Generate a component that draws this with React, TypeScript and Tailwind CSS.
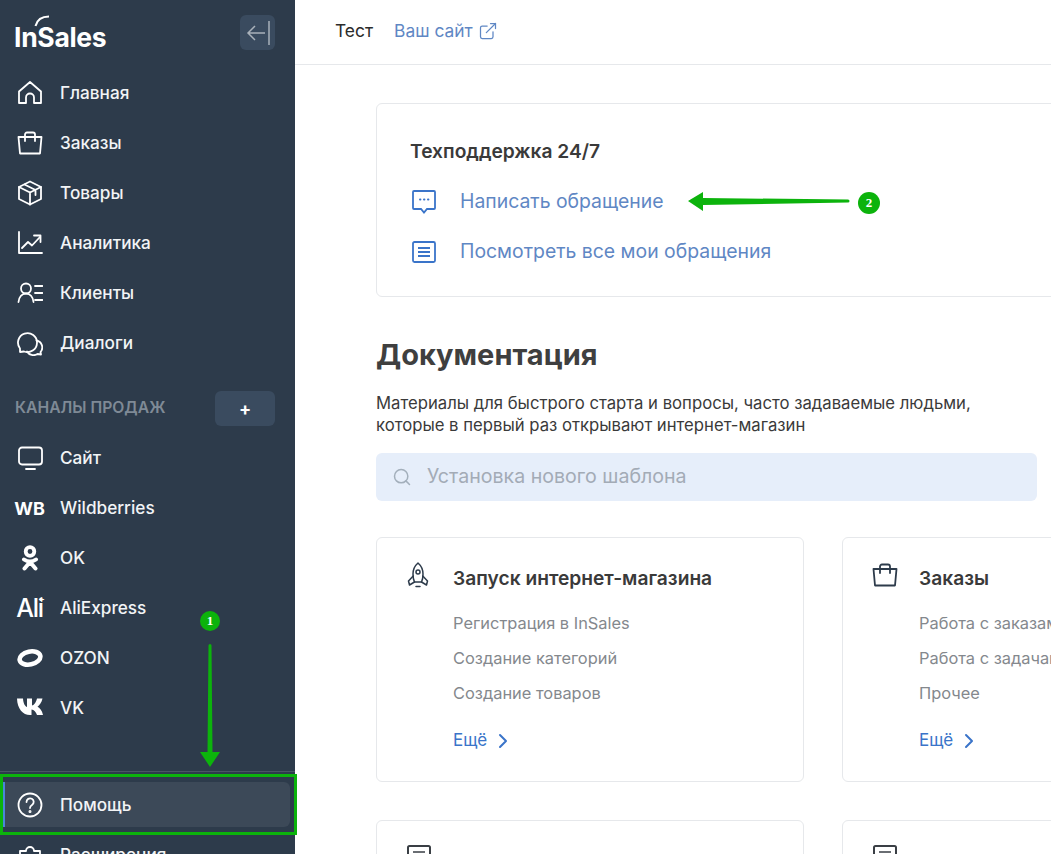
import type { ReactNode } from "react";
import { ChevronRight, ExternalLink, Search } from "lucide-react";

const ico = "h-[26px] w-[26px]";

function Svg({ children, className = ico }: { children: ReactNode; className?: string }) {
  return (
    <svg viewBox="0 0 26 26" fill="none" stroke="currentColor" strokeWidth="1.8" strokeLinecap="round" strokeLinejoin="round" className={className}>
      {children}
    </svg>
  );
}

const HomeIcon = () => (
  <Svg>
    <path d="M2 23V11.500L13 2l11 9.500V23h-7v-5.500a4 4 0 0 0-8 0V23z" />
  </Svg>
);
const BagIcon = ({ className }: { className?: string }) => (
  <Svg className={className}>
    <path d="M1.500 7h23l-1.500 16.500H3z" />
    <path d="M8 11V4.500a2 2 0 0 1 2-2h6a2 2 0 0 1 2 2V11" />
  </Svg>
);
const BoxIcon = () => (
  <Svg>
    <path d="M13 1.500 24 7v12l-11 5.500L2 19V7z" />
    <path d="M2 7l11 5.500L24 7M13 12.500v12M7.500 4.500l11 5.500v5" />
  </Svg>
);
const ChartIcon = () => (
  <Svg>
    <path d="M2 2v21h23" />
    <path d="M5 18l6-6 4 3.500L23 7" />
    <path d="M17 5.500h6.500V12" />
  </Svg>
);
const ClientsIcon = () => (
  <Svg>
    <circle cx="9" cy="8.500" r="5" />
    <path d="M1.500 22c.5-5 3.500-8.500 7.500-8.500s7 3.500 7.500 8.500" />
    <path d="M18 6h7.500M18 13h7.500M18 20h7.500" />
  </Svg>
);
const ChatIcon = () => (
  <Svg>
    <path d="M3 18.500A9.500 9.500 0 1 1 7 21.500l-4 .5z" />
    <path d="M19.500 10.500a7 7 0 0 1 4 11.500l.5 2.500-3.500-.5A7.500 7.500 0 0 1 10 21.500" />
  </Svg>
);
const MonitorIcon = () => (
  <Svg>
    <rect x="2" y="2.500" width="23" height="17" rx="3" />
    <path d="M9 24h9" />
  </Svg>
);
const OkIcon = () => (
  <svg viewBox="0 0 26 26" className={ico} fill="none" stroke="currentColor" strokeLinecap="round">
    <circle cx="13" cy="6.500" r="4.300" strokeWidth="3.800" />
    <path d="M7 14.500c3.600 2.600 8.400 2.600 12 0M13 17l-5.500 6.500M13 17l5.500 6.500" strokeWidth="4" />
  </svg>
);
const OzonIcon = () => (
  <svg viewBox="0 0 26 26" className={ico} fill="none" stroke="currentColor">
    <ellipse cx="13" cy="13" rx="10.500" ry="6.500" strokeWidth="4.600" transform="rotate(-12 13 13)" />
  </svg>
);
const VkIcon = () => (
  <svg viewBox="0 0 26 26" className={ico} fill="currentColor">
    <path d="M0 3.500h6c.3 5.500 2.500 8 4 8.500V3.500h5v7c1.800-.2 4-3 5-7h5.500c-.9 4.500-3.400 7-5 8.300 2 1 4.500 3.500 5.500 8.200h-6c-.9-3-3-5.300-5.500-5.500v5.500H13C6 20 .3 14 0 3.500z" />
  </svg>
);
const HelpIcon = () => (
  <Svg>
    <circle cx="13" cy="13" r="11.500" />
    <path d="M9.500 10a3.600 3.600 0 1 1 5.500 3c-1.300.9-2 1.500-2 3" />
    <circle cx="13" cy="19.500" r=".6" />
  </Svg>
);
const PuzzleIcon = () => (
  <Svg>
    <path d="M3 9h6a3.500 3.500 0 1 1 8 0h6v6a3.500 3.500 0 1 1 0 8v3H3z" />
  </Svg>
);
const RocketIcon = () => (
  <svg viewBox="0 0 24 28" fill="none" stroke="#2d3b4b" strokeWidth="1.500" strokeLinecap="round" strokeLinejoin="round" className="h-[28px] w-[24px]">
    <path d="M12 2c-3.500 3-5 7-5 11 0 3 .5 6 1.500 8h7c1-2 1.500-5 1.500-8 0-4-1.500-8-5-11z" />
    <circle cx="12" cy="11" r="2" />
    <path d="M7.200 15 2.500 20l1 4 5-3M16.800 15l4.700 5-1 4-5-3M10 25.500h4" />
  </svg>
);
const DocIcon = () => (
  <svg viewBox="0 0 26 26" fill="none" stroke="#3a3f45" strokeWidth="2" className="h-[26px] w-[26px]">
    <rect x="2" y="1" width="22" height="24" rx="1.500" />
    <path d="M7 7h12M7 12h12M7 17h12" strokeWidth="1.600" />
  </svg>
);

const NavText = ({ children }: { children: ReactNode }) => (
  <span className="text-[17.2px] font-medium text-[#f2f4f6]">{children}</span>
);

function NavItem({ icon, label }: { icon: ReactNode; label: string }) {
  return (
    <div className="flex h-[50px] shrink-0 items-center">
      <div className="flex w-[60px] shrink-0 justify-center pr-[1px] text-white">{icon}</div>
      <NavText>{label}</NavText>
    </div>
  );
}

function DocCard({ icon, title, items }: { icon: ReactNode; title?: string; items?: string[] }) {
  return (
    <div className="h-[245px] w-[428px] shrink-0 rounded-md border border-[#e6e8eb] bg-white pl-[29px] pt-[22px]">
      <div className="flex h-[36px] items-center">
        <div className="mt-[-7px] flex w-[47px] shrink-0 pr-[10px] text-[#2d3b4b]">{icon}</div>
        {title && <span className="text-[19.200px] font-semibold text-[#3a3a3a]">{title}</span>}
      </div>
      {items && (
        <div className="ml-[47px] mt-[10px] flex flex-col">
          {items.map((item) => (
            <div key={item} className="flex h-[35px] items-center whitespace-nowrap text-[16.400px] text-[#84888d]">
              {item}
            </div>
          ))}
          <div className="mt-[17px] flex items-center gap-1 text-[17px] text-[#3a74c9]">
            Ещё <ChevronRight className="h-[24px] w-[24px]" strokeWidth={2} />
          </div>
        </div>
      )}
    </div>
  );
}

export default function App() {
  return (
    <div className="relative flex h-[854px] w-[1051px] overflow-hidden bg-white font-['Inter',sans-serif]">
      <aside className="flex h-full w-[295px] shrink-0 flex-col bg-[#2d3b4b]">
        <div className="flex h-[68px] shrink-0 items-center justify-between pb-[3px] pl-[14px] pr-[20px]">
          <div className="relative mt-[9px] text-[26.500px] font-bold leading-none tracking-[-0.3px] text-white">
            InSales
            <svg viewBox="0 0 16 12" className="absolute left-[20px] top-[-9px] h-[12px] w-[16px]" fill="none" stroke="white" strokeWidth="2">
              <path d="M1.500 11C3 5 8 1.500 15 1.500" />
            </svg>
          </div>
          <div className="flex h-[35px] w-[35px] items-center justify-center rounded-md bg-[#3a4b5f] text-[#a9b1ba]">
            <svg viewBox="0 0 26 26" className="h-[26px] w-[26px]" fill="none" stroke="currentColor" strokeWidth="1.500">
              <path d="M20 13H3M10 6l-7 7 7 7" />
              <path d="M24 1v24" />
            </svg>
          </div>
        </div>
        <NavItem icon={<HomeIcon />} label="Главная" />
        <NavItem icon={<BagIcon />} label="Заказы" />
        <NavItem icon={<BoxIcon />} label="Товары" />
        <NavItem icon={<ChartIcon />} label="Аналитика" />
        <NavItem icon={<ClientsIcon />} label="Клиенты" />
        <NavItem icon={<ChatIcon />} label="Диалоги" />
        <div className="mt-[15px] flex h-[50px] shrink-0 items-center justify-between pl-[15px] pr-[20px]">
          <span className="text-[15.700px] font-semibold text-[#7f8a96]">КАНАЛЫ ПРОДАЖ</span>
          <div className="flex h-[35px] w-[60px] items-center justify-center rounded-md bg-[#3a4b5f] text-[18px] font-bold text-white">+</div>
        </div>
        <NavItem icon={<MonitorIcon />} label="Сайт" />
        <NavItem icon={<span className="text-[18px] font-bold">WB</span>} label="Wildberries" />
        <NavItem icon={<OkIcon />} label="OK" />
        <NavItem
          icon={
            <span className="relative text-[25px] font-medium leading-none tracking-tighter">
              Ali
              <span className="absolute right-[-1px] top-[-3px] text-[10px]">+</span>
            </span>
          }
          label="AliExpress"
        />
        <NavItem icon={<OzonIcon />} label="OZON" />
        <NavItem icon={<VkIcon />} label="VK" />
        <div className="mt-[38px] shrink-0 border-t border-[#4a5665] pt-[10px]">
          <div className="ml-[2px] flex h-[45px] w-[288px] items-center rounded-r-md border-l-[3px] border-[#4a86d8] bg-[#3c4958]">
            <div className="flex w-[55px] shrink-0 justify-center pr-[5px] text-white">
              <HelpIcon />
            </div>
            <NavText>Помощь</NavText>
          </div>
        </div>
        <div className="mt-[3px] shrink-0">
          <NavItem icon={<PuzzleIcon />} label="Расширения" />
        </div>
      </aside>

      <main className="min-w-0 flex-1">
        <header className="flex h-[65px] items-center gap-[21px] border-b border-[#e6e8eb] pb-[2px] pl-[40px] text-[17.400px]">
          <span className="text-[#2b2b2b]">Тест</span>
          <span className="flex items-center gap-[5px] text-[#5f87c4]">
            Ваш сайт <ExternalLink className="h-[20px] w-[20px]" strokeWidth={1.5} />
          </span>
        </header>
        <div className="w-[900px] pl-[81px] pt-[38px]">
          <section className="h-[194px] rounded-md border border-[#e6e8eb] pl-[33px] pt-[34px]">
            <h3 className="text-[19.200px] font-semibold leading-[27px] text-[#3a3a3a]">Техподдержка 24/7</h3>
            <div className="mt-[12px] flex h-[50px] items-center gap-[23px] pl-[1px] text-[19.400px] text-[#5f87c4]">
              <svg viewBox="0 0 26 26" className="h-[26px] w-[26px] text-[#3a74c9]" fill="none" stroke="currentColor" strokeWidth="1.800" strokeLinecap="round">
                <path d="M3 2h20a1 1 0 0 1 1 1v16a1 1 0 0 1-1 1h-7l-3 3.500L10 20H3a1 1 0 0 1-1-1V3a1 1 0 0 1 1-1z" />
                <path d="M9 10.500h.4M13 10.500h.4M17 10.500h.4" strokeWidth="2" />
              </svg>
              Написать обращение
            </div>
            <div className="flex h-[50px] items-center gap-[23px] pl-[1px] text-[19.400px] text-[#5f87c4]">
              <svg viewBox="0 0 26 26" className="h-[26px] w-[26px] text-[#3a74c9]" fill="none" stroke="currentColor" strokeWidth="1.800">
                <rect x="2" y="3" width="22" height="20" rx="1.500" />
                <path d="M7 9h12M7 13h12M7 17h12" />
              </svg>
              Посмотреть все мои обращения
            </div>
          </section>

          <h1 className="mt-[38px] text-[29px] font-bold leading-[40px] text-[#3f3f3f]">Документация</h1>
          <p className="mt-[17px] text-[16.700px] leading-[22px] text-[#3a3a3a]">
            Материалы для быстрого старта и вопросы, часто задаваемые людьми,
            <br />
            которые в первый раз открывают интернет-магазин
          </p>
          <div className="mt-[17px] flex h-[48px] w-[661px] items-center gap-[15px] rounded-md bg-[#e6eefa] pl-[16px] text-[19.600px] text-[#a3abb6]">
            <Search className="h-[20px] w-[20px] text-[#a3afbb]" strokeWidth={1.8} />
            Установка нового шаблона
          </div>

          <div className="mt-[36px] flex gap-[38px]">
            <DocCard icon={<RocketIcon />} title="Запуск интернет-магазина" items={["Регистрация в InSales", "Создание категорий", "Создание товаров"]} />
            <DocCard icon={<BagIcon className="h-[26px] w-[26px]" />} title="Заказы" items={["Работа с заказами", "Работа с задачами", "Прочее"]} />
          </div>
          <div className="mt-[38px] flex gap-[38px]">
            <DocCard icon={<DocIcon />} />
            <DocCard icon={<DocIcon />} />
          </div>
        </div>
      </main>

      {/* annotations drawn over the screenshot */}
      <div className="absolute left-0 top-[774px] h-[61px] w-[297px] border-[3px] border-[#0cb30c]" />
      <div className="absolute left-[200px] top-[611px] flex h-[20px] w-[20px] items-center justify-center rounded-full bg-[#0cb30c] font-['Liberation_Serif',serif] text-[13px] font-bold text-white">1</div>
      <svg viewBox="0 0 20 123" className="absolute left-[200px] top-[644px] h-[123px] w-[20px]" fill="#0cb30c">
        <path d="M8.500 1.500a1.500 1.500 0 0 1 3 0l1 106.500H20L10 123 0 108h7.500z" />
      </svg>
      <div className="absolute left-[858px] top-[192px] flex h-[22px] w-[22px] items-center justify-center rounded-full bg-[#0cb30c] font-['Liberation_Serif',serif] text-[13px] font-bold text-white">2</div>
      <svg viewBox="0 0 162 20" className="absolute left-[688px] top-[191px] h-[20px] w-[162px]" fill="#0cb30c">
        <path d="M0 10 15 1v6l145 1.500a1.500 1.500 0 0 1 0 3L15 14v6z" />
      </svg>
    </div>
  );
}
